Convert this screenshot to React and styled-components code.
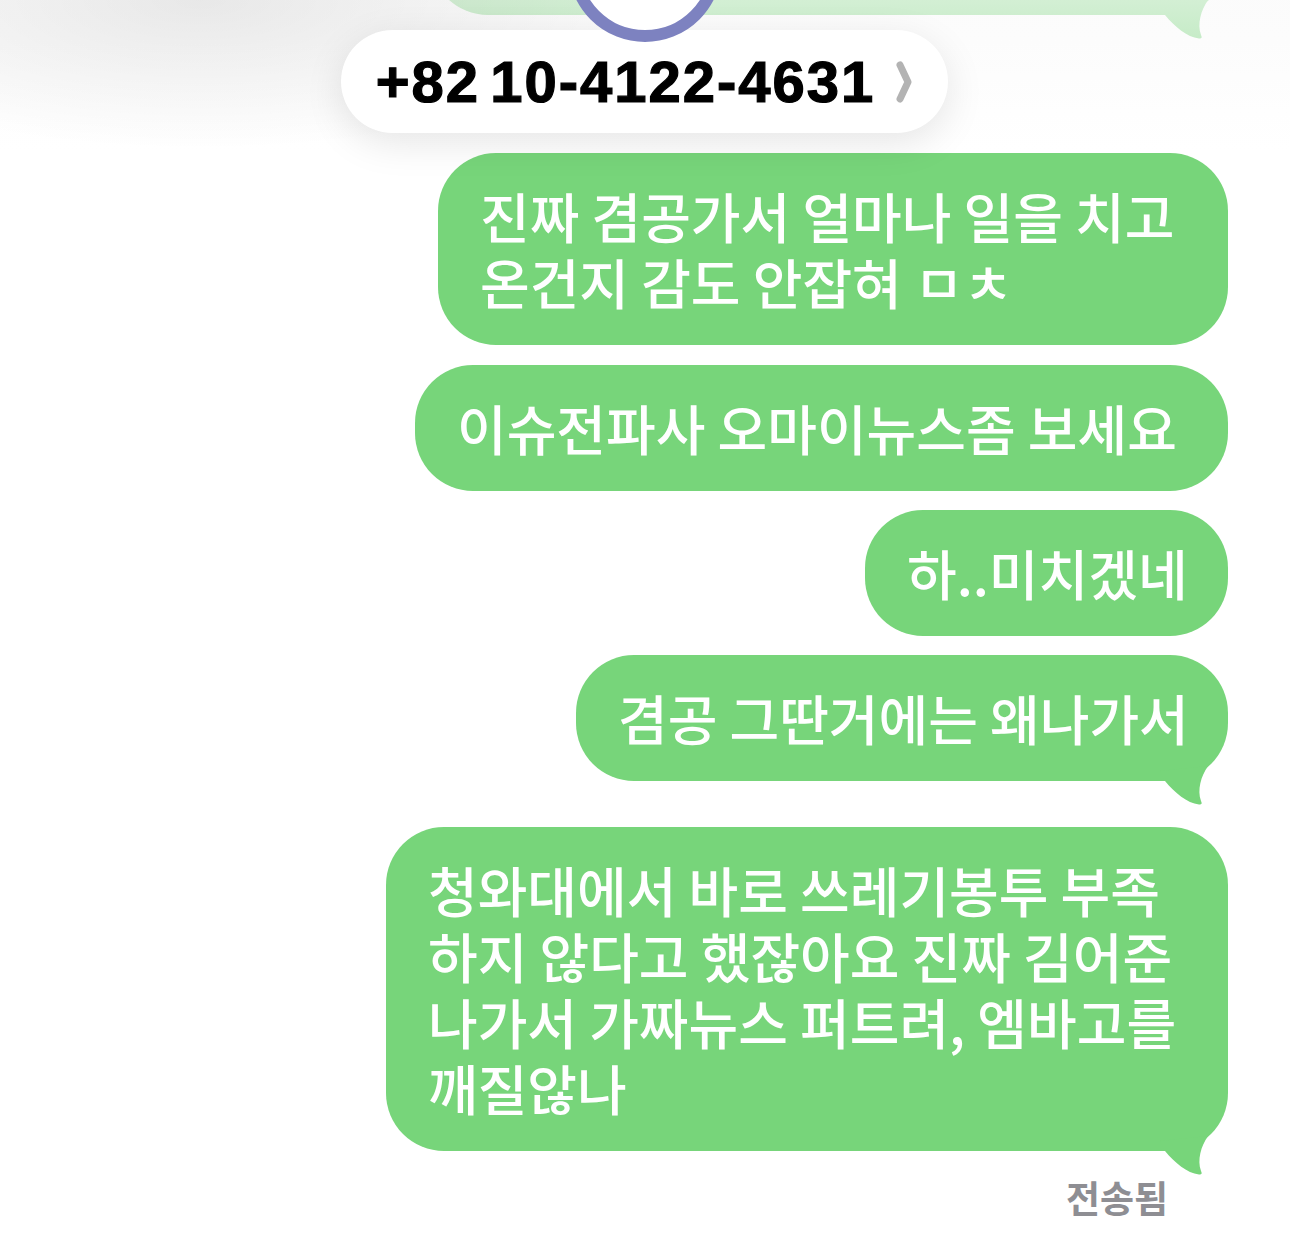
import styled, { createGlobalStyle } from 'styled-components';

const GREEN = '#77d57a';

const Global = createGlobalStyle`
  html, body { margin: 0; padding: 0; background: #fff; }
  body { font-family: 'Noto Sans CJK KR', 'Noto Sans', sans-serif; }
`;

const Screen = styled.div`
  position: relative;
  width: 1290px;
  height: 1257px;
  overflow: hidden;
  background: #fff;
`;

const Thread = styled.div`
  display: flex;
  flex-direction: column;
  align-items: flex-end;
  padding-right: 62px;
`;

const Bubble = styled.div`
  position: relative;
  box-sizing: border-box;
  width: ${p => p.$w}px;
  margin-top: ${p => p.$mt}px;
  padding: 30px 0 30px 42px;
  border-radius: 58px;
  background: ${GREEN};
  color: #fff;
  font-size: 54px;
  font-weight: 500;
  line-height: 66px;
  white-space: nowrap;
`;

const TailSvg = styled.svg`
  position: absolute;
  right: 18px;
  bottom: -30px;
  width: 60px;
  height: 50px;
  overflow: visible;
`;

const Status = styled.div`
  margin-top: 24px;
  margin-right: 60px;
  font-size: 37px;
  font-weight: 700;
  line-height: 44px;
  color: #8e8e93;
`;

const HeaderFade = styled.div`
  position: absolute;
  top: 0;
  left: 0;
  right: 0;
  height: 190px;
  pointer-events: none;
  background:
    radial-gradient(ellipse 440px 150px at 200px 0, rgba(0, 0, 0, 0.08), rgba(0, 0, 0, 0) 100%),
    linear-gradient(to bottom, rgba(250, 250, 250, 0.7) 0, rgba(250, 250, 250, 0.6) 40px, rgba(255, 255, 255, 0) 150px);
`;

const NumberPill = styled.div`
  position: absolute;
  left: 341px;
  top: 30px;
  width: 607px;
  height: 103px;
  border-radius: 52px;
  background: #fff;
  box-shadow: 0 10px 38px rgba(0, 0, 0, 0.1);
  display: flex;
  align-items: center;
  justify-content: center;
  gap: 20px;
`;

const PhoneNumber = styled.span`
  font-family: 'Liberation Sans', Arial, sans-serif;
  font-weight: 700;
  font-size: 58px;
  letter-spacing: 2px;
  word-spacing: -8px;
  color: #000;
  -webkit-text-stroke: 1.2px #000;
`;

const Avatar = styled.div`
  position: absolute;
  left: 568px;
  top: -112px;
  width: 154px;
  height: 154px;
  box-sizing: border-box;
  border-radius: 50%;
  border: 12px solid #7d82c0;
  background: #fff;
`;

const Tail = () => (
  <TailSvg viewBox="0 0 60 50">
    <path
      d="M58 5 C51 15 47 29 51 40 Q53 44 49 43.5 C37 42 25 32 15 20 L10 10 Z"
      fill={GREEN}
    />
  </TailSvg>
);

const Chevron = () => (
  <svg width="18" height="42" viewBox="0 0 18 42">
    <path d="M5 4 L13 21 L5 38" fill="none" stroke="#b3b3b3" strokeWidth="7" strokeLinecap="round" strokeLinejoin="round" />
  </svg>
);

export default function App() {
  return (
    <Screen>
      <Global />
      <Thread>
        <Bubble $w={798} $mt={-111}>
          &nbsp;
          <Tail />
        </Bubble>
        <Bubble $w={790} $mt={138}>
          진짜 겸공가서 얼마나 일을 치고<br />온건지 감도 안잡혀 ㅁㅊ
        </Bubble>
        <Bubble $w={813} $mt={20}>
          이슈전파사 오마이뉴스좀 보세요
        </Bubble>
        <Bubble $w={363} $mt={19}>
          하..미치겠네
        </Bubble>
        <Bubble $w={652} $mt={19}>
          겸공 그딴거에는 왜나가서
          <Tail />
        </Bubble>
        <Bubble $w={842} $mt={46}>
          청와대에서 바로 쓰레기봉투 부족<br />
          하지 않다고 했잖아요 진짜 김어준<br />
          나가서 가짜뉴스 퍼트려, 엠바고를<br />
          깨질않나
          <Tail />
        </Bubble>
        <Status>전송됨</Status>
      </Thread>
      <HeaderFade />
      <NumberPill>
        <PhoneNumber>+82 10-4122-4631</PhoneNumber>
        <Chevron />
      </NumberPill>
      <Avatar />
    </Screen>
  );
}
